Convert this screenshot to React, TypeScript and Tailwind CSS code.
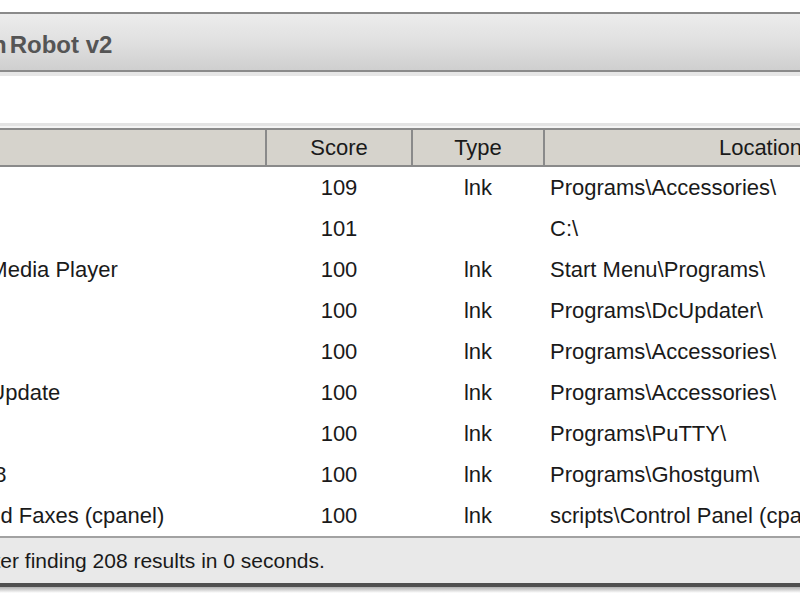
const rows = [
  { name: "Paint", score: 109, type: "lnk", location: "Programs\\Accessories\\" },
  { name: "Windows", score: 101, type: "", location: "C:\\" },
  { name: "Windows Media Player", score: 100, type: "lnk", location: "Start Menu\\Programs\\" },
  { name: "DcUpdater", score: 100, type: "lnk", location: "Programs\\DcUpdater\\" },
  { name: "Notepad", score: 100, type: "lnk", location: "Programs\\Accessories\\" },
  { name: "Windows Update", score: 100, type: "lnk", location: "Programs\\Accessories\\" },
  { name: "PuTTY", score: 100, type: "lnk", location: "Programs\\PuTTY\\" },
  { name: "GSview 4.8", score: 100, type: "lnk", location: "Programs\\Ghostgum\\" },
  { name: "Printers and Faxes (cpanel)", score: 100, type: "lnk", location: "scripts\\Control Panel (cpanel)\\" },
];

export default function App() {
  return (
    <div className="w-[800px] h-[600px] overflow-hidden bg-white font-['Liberation_Sans',Arial,sans-serif] text-[#1a1a1a]">
      <div className="h-[12px]" />

      {/* title bar */}
      <div className="h-[60px] border-y-2 border-[#8a8a8a] bg-gradient-to-b from-[#ececec] via-[#e0e0e0] to-[#cfcfcf] flex items-center pt-[5px] whitespace-nowrap">
        <span className="-ml-[8px] text-[24px] font-bold text-[#555555]">n</span>
        <span className="ml-[3px] text-[24px] font-bold text-[#555555]">Robot v2</span>
      </div>
      <div className="h-[4px] bg-[#e6e6e6]" />

      {/* search area */}
      <div className="h-[47px] bg-white" />
      <div className="h-[3px] bg-[#e3e3e3]" />
      <div className="h-[2px] bg-[#f4f4f4]" />

      {/* list */}
      <div className="-ml-[112px] w-[1100px]">
        <div className="grid grid-cols-[377px_146px_132px_433px] h-[39px] border-y-2 border-[#8a8a8a] bg-[#d6d3cc] text-[22px]">
          <div />
          <div className="border-l-2 border-[#8a8a8a] flex items-center justify-center">Score</div>
          <div className="border-l-2 border-[#8a8a8a] flex items-center justify-center">Type</div>
          <div className="border-l-2 border-[#8a8a8a] flex items-center justify-center">Location</div>
        </div>
        {rows.map((r, i) => (
          <div key={i} className="grid grid-cols-[377px_146px_132px_433px] h-[41px] text-[22px] whitespace-nowrap">
            <div className="pl-[6px] flex items-center">{r.name}</div>
            <div className="border-l-2 border-transparent flex items-center justify-center">{r.score}</div>
            <div className="border-l-2 border-transparent flex items-center justify-center">{r.type}</div>
            <div className="border-l-2 border-transparent pl-[5px] flex items-center">{r.location}</div>
          </div>
        ))}
      </div>

      {/* status bar */}
      <div className="h-[47px] border-t-2 border-[#a2a2a2] bg-[#e9e9e9] flex items-center whitespace-nowrap">
        <span className="-ml-[23px] text-[21px]">after finding 208 results in 0 seconds.</span>
      </div>
      <div className="h-[4px] bg-[#505050]" />
      <div className="h-[6px] bg-gradient-to-b from-[#b0b0b0] to-white" />
    </div>
  );
}
